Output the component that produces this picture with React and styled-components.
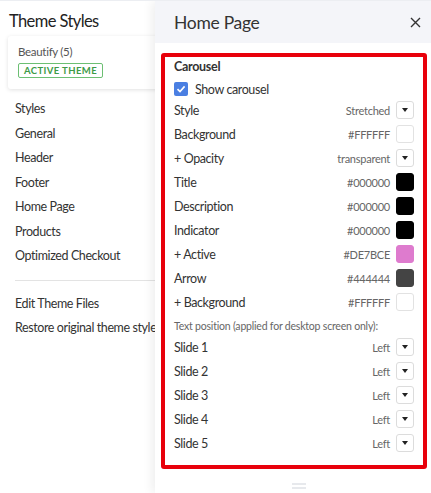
import React from "react";
import styled, { createGlobalStyle } from "styled-components";

const Global = createGlobalStyle`
  html, body { margin: 0; padding: 0; }
  body {
    font-family: Lato, "Liberation Sans", sans-serif;
    color: #333;
    background: #fff;
    width: 431px;
    height: 493px;
    overflow: hidden;
  }
`;

const Page = styled.div`
  position: relative;
  width: 431px;
  height: 493px;
  overflow: hidden;
  border-top: 1px solid #eceef2;
  box-sizing: border-box;
`;

const Sidebar = styled.div`
  padding: 10px 0 0 0;
  width: 300px;
`;

const SideTitle = styled.h1`
  margin: 0 0 5px 9px;
  font-size: 16.5px;
  letter-spacing: -0.6px;
  font-weight: 400;
  color: #222;
  line-height: 20px;
`;

const ThemeCard = styled.div`
  margin-left: 8px;
  padding: 8px 10px 11px 10px;
  border-radius: 3px;
  box-shadow: 0 1px 4px rgba(0, 0, 0, 0.12);
  background: #fff;
  display: flex;
  flex-direction: column;
  align-items: flex-start;
`;

const ThemeName = styled.div`
  font-size: 11.5px;
  letter-spacing: -0.3px;
  color: #555;
  line-height: 16px;
  margin-bottom: 3px;
`;

const Badge = styled.span`
  display: block;
  border: 1px solid #6cbf73;
  color: #3d9a47;
  font-size: 9.5px;
  font-weight: 700;
  letter-spacing: 0.4px;
  padding: 1px 5px;
  border-radius: 2px;
  line-height: 11px;
`;

const Menu = styled.div`
  margin-top: 8px;
  padding-left: 15px;
  display: flex;
  flex-direction: column;
`;

const MenuItem = styled.div`
  font-size: 12.5px;
  letter-spacing: -0.4px;
  line-height: 24.5px;
  color: #333;
  white-space: nowrap;
`;

const Divider = styled.hr`
  border: 0;
  border-top: 1px solid #e3e3e3;
  margin: 11px 0 11px 0;
`;

const Drawer = styled.div`
  position: absolute;
  top: 0;
  left: 155px;
  right: 0;
  bottom: 0;
  background: #fff;
  box-shadow: -3px 0 10px rgba(0, 0, 0, 0.07);
  display: flex;
  flex-direction: column;
`;

const DrawerHeader = styled.div`
  flex-shrink: 0;
  height: 42px;
  background: #f4f5f9;
  display: flex;
  align-items: center;
  justify-content: space-between;
  padding: 0 10px 0 19px;
`;

const DrawerTitle = styled.div`
  font-size: 17.5px;
  letter-spacing: -0.3px;
  color: #333;
`;

const Close = styled.div`
  line-height: 1;
  display: flex;
`;

const DrawerBody = styled.div`
  flex-shrink: 0;
  padding: 10px 4px 0 6px;
`;

const Highlight = styled.div`
  border: 4px solid #e8000b;
  border-radius: 3px;
  padding: 1px 9px 13px 9px;
  display: flex;
  flex-direction: column;
`;

const SectionTitle = styled.div`
  font-size: 12.5px;
  letter-spacing: -0.3px;
  font-weight: 700;
  color: #333;
  line-height: 16px;
  padding-top: 1px;
`;

const CheckRow = styled.label`
  display: flex;
  align-items: center;
  gap: 7px;
  margin-top: 6px;
  font-size: 12.5px;
  letter-spacing: -0.4px;
  height: 16px;
`;

const Check = styled.span`
  width: 14px;
  height: 14px;
  border-radius: 2px;
  background: #4a7fe2;
  display: inline-flex;
  align-items: center;
  justify-content: center;
`;

const Row = styled.div`
  display: flex;
  align-items: center;
  height: 18px;
  margin-top: ${(p) => p.$mt}px;
`;

const Label = styled.div`
  flex: 1;
  font-size: 12.5px;
  letter-spacing: -0.4px;
  color: #333;
`;

const Value = styled.div`
  font-size: 11px;
  letter-spacing: -0.25px;
  color: #666;
  margin-right: 6px;
`;

const Control = styled.div`
  width: 18px;
  height: 18px;
  box-sizing: border-box;
  border-radius: 3px;
  border: 1px solid ${(p) => (p.$color ? (p.$color === "#FFFFFF" ? "#e2e2e2" : p.$color) : "#dcdcdc")};
  background: ${(p) => p.$color || "#fff"};
  display: flex;
  align-items: center;
  justify-content: center;
`;

const Caret = styled.span`
  width: 0;
  height: 0;
  border-left: 3px solid transparent;
  border-right: 3px solid transparent;
  border-top: 4px solid #222;
`;

const Note = styled.div`
  font-size: 10.5px;
  letter-spacing: -0.2px;
  color: #666;
  margin-top: 8px;
  line-height: 14px;
`;

const Handle = styled.div`
  height: 34px;
  display: flex;
  align-items: center;
  justify-content: center;
  padding-left: 10px;
`;

const rows = [
  { label: "Style", value: "Stretched", type: "select" },
  { label: "Background", value: "#FFFFFF", color: "#FFFFFF" },
  { label: "+ Opacity", value: "transparent", type: "select" },
  { label: "Title", value: "#000000", color: "#000000" },
  { label: "Description", value: "#000000", color: "#000000" },
  { label: "Indicator", value: "#000000", color: "#000000" },
  { label: "+ Active", value: "#DE7BCE", color: "#DE7BCE" },
  { label: "Arrow", value: "#444444", color: "#444444" },
  { label: "+ Background", value: "#FFFFFF", color: "#FFFFFF" },
];

const slides = [1, 2, 3, 4, 5];

function SettingRow({ label, value, type, color, mt }) {
  return (
    <Row $mt={mt}>
      <Label>{label}</Label>
      <Value>{value}</Value>
      {type === "select" ? (
        <Control>
          <Caret />
        </Control>
      ) : (
        <Control $color={color} />
      )}
    </Row>
  );
}

export default function App() {
  return (
    <>
      <Global />
      <Page>
        <Sidebar>
          <SideTitle>Theme Styles</SideTitle>
          <ThemeCard>
            <ThemeName>Beautify (5)</ThemeName>
            <Badge>ACTIVE THEME</Badge>
          </ThemeCard>
          <Menu>
            {["Styles", "General", "Header", "Footer", "Home Page", "Products", "Optimized Checkout"].map((m) => (
              <MenuItem key={m}>{m}</MenuItem>
            ))}
            <Divider />
            <MenuItem>Edit Theme Files</MenuItem>
            <MenuItem>Restore original theme styles</MenuItem>
          </Menu>
        </Sidebar>
        <Drawer>
          <DrawerHeader>
            <DrawerTitle>Home Page</DrawerTitle>
            <Close>
              <svg width="11" height="11" viewBox="0 0 11 11">
                <path d="M1 1L10 10M10 1L1 10" stroke="#333" strokeWidth="1.4" />
              </svg>
            </Close>
          </DrawerHeader>
          <DrawerBody>
            <Highlight>
              <SectionTitle>Carousel</SectionTitle>
              <CheckRow>
                <Check>
                  <svg width="10" height="10" viewBox="0 0 10 10">
                    <path d="M1.5 5.2L4 7.6L8.6 2.4" fill="none" stroke="#fff" strokeWidth="1.6" />
                  </svg>
                </Check>
                Show carousel
              </CheckRow>
              {rows.map((r, i) => (
                <SettingRow key={i} {...r} mt={i === 0 ? 4 : 6} />
              ))}
              <Note>Text position (applied for desktop screen only):</Note>
              {slides.map((n, i) => (
                <SettingRow key={n} label={`Slide ${n}`} value="Left" type="select" mt={i === 0 ? 5 : 6} />
              ))}
            </Highlight>
            <Handle>
              <svg width="14" height="6" viewBox="0 0 14 6">
                <path d="M0 1H14M0 5H14" stroke="#cfd3da" strokeWidth="1" />
              </svg>
            </Handle>
          </DrawerBody>
        </Drawer>
      </Page>
    </>
  );
}
